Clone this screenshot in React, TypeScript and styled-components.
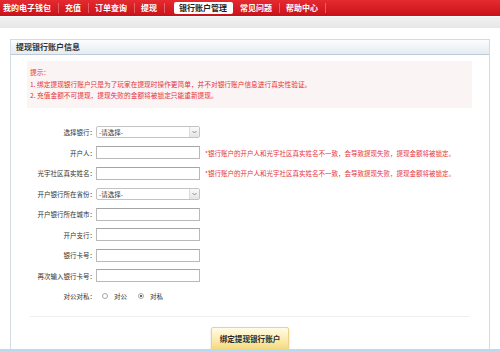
import styled, { createGlobalStyle } from "styled-components";

const GlobalStyle = createGlobalStyle`
  html, body {
    margin: 0;
    padding: 0;
    background: #ffffff;
  }
  body {
    font-family: "Noto Sans CJK SC", "Noto Sans", sans-serif;
    color: #333333;
    overflow: hidden;
  }
`;

const Page = styled.div`
  width: 500px;
  height: 351px;
  position: relative;
  overflow: hidden;
`;

const NavBar = styled.ul`
  display: flex;
  align-items: center;
  margin: 0;
  padding: 0;
  height: 16px;
  list-style: none;
  background: linear-gradient(#e52a30, #c8121a);
`;

const NavItem = styled.li<{ $active?: boolean; $first?: boolean }>`
  font-size: 8px;
  font-weight: bold;
  white-space: nowrap;
  line-height: ${({ $active }) => ($active ? "12px" : "10px")};
  color: ${({ $active }) => ($active ? "#222222" : "#ffffff")};
  background: ${({ $active }) => ($active ? "#ffffff" : "transparent")};
  border-radius: ${({ $active }) => ($active ? "2px" : "0")};
  margin: ${({ $active }) => ($active ? "0 1px 0 9px" : "0")};
  padding: ${({ $active, $first }) =>
    $active ? "0 5.5px" : $first ? "0 6.5px 0 3px" : "0 6.5px"};
  border-right: ${({ $active }) =>
    $active ? "none" : "1px solid rgba(255, 170, 170, 0.45)"};
`;

const GrayBand = styled.div`
  height: 11px;
  margin-top: 1px;
  background: linear-gradient(#f1f1f1, #e6e6e6);
`;

const Panel = styled.div`
  margin: 11px 10px 0 10px;
  border: 1px solid #d3dbe3;
  border-bottom: none;
  height: 320px;
`;

const PanelHeader = styled.div`
  height: 14px;
  line-height: 14px;
  padding-left: 5px;
  font-size: 8px;
  font-weight: bold;
  color: #333333;
  background: linear-gradient(#fbfcfd, #e6ecf2);
  border-bottom: 1px solid #bdcbd8;
`;

const TipBox = styled.div`
  margin: 6px 17px 0 16px;
  padding: 6px 3px;
  background: #fbf4f4;
  color: #e2333a;
  font-size: 6.7px;
  line-height: 11.5px;
`;

const Form = styled.div`
  display: flex;
  flex-direction: column;
  gap: 7.5px;
  margin-top: 18px;
`;

const Row = styled.div`
  display: flex;
  align-items: center;
  height: 13px;
`;

const Label = styled.span`
  width: 85px;
  text-align: right;
  font-size: 6.5px;
  color: #333333;
  white-space: nowrap;
`;

const TextInput = styled.input`
  box-sizing: border-box;
  width: 104px;
  height: 13px;
  margin: 0;
  padding: 0 2px;
  border: 1px solid #b9b9b9;
  border-top-color: #a4a4a4;
  background: #ffffff;
  font-size: 6.5px;
`;

const Select = styled.div`
  box-sizing: border-box;
  display: flex;
  align-items: center;
  justify-content: space-between;
  width: 104px;
  height: 12px;
  border: 1px solid #c3c3c3;
  border-radius: 2px;
  background: #ffffff;
  font-size: 6.5px;
  color: #333333;
  padding-left: 2px;
`;

const SelectArrow = styled.span`
  display: flex;
  align-items: center;
  justify-content: center;
  width: 9px;
  height: 10px;
  border-left: 1px solid #dcdcdc;
  background: linear-gradient(#fafafa, #e4e4e4);
`;

const Hint = styled.span`
  margin-left: 5px;
  font-size: 6.5px;
  color: #e4353c;
  white-space: nowrap;
`;

const RadioGroup = styled.div`
  display: flex;
  align-items: center;
  margin-left: 6px;
  font-size: 6.5px;
  color: #333333;
`;

const Radio = styled.span<{ $checked?: boolean }>`
  box-sizing: border-box;
  display: inline-flex;
  align-items: center;
  justify-content: center;
  width: 6px;
  height: 6px;
  margin-right: 6px;
  border: 1px solid #a8a8a8;
  border-radius: 50%;
  background: #ffffff;

  &::after {
    content: "";
    width: 2px;
    height: 2px;
    border-radius: 50%;
    background: ${({ $checked }) => ($checked ? "#333333" : "transparent")};
  }
`;

const RadioText = styled.span`
  margin-right: 11px;
`;

const Divider = styled.div`
  margin: 13px 19px 0 19px;
  border-top: 1px solid #f0f0f0;
`;

const ButtonWrap = styled.div`
  display: flex;
  justify-content: center;
  margin-top: 10px;
`;

const SubmitButton = styled.button`
  box-sizing: border-box;
  width: 78px;
  height: 24px;
  padding: 0;
  border: 1px solid #ecd38a;
  border-radius: 2px;
  background: linear-gradient(#fffbe6, #fbe9a8 60%, #f4d676);
  box-shadow: 0 1px 2px rgba(0, 0, 0, 0.18);
  font-family: inherit;
  font-size: 7.6px;
  font-weight: bold;
  color: #2a2a2a;
`;

const FooterLine = styled.div`
  position: absolute;
  left: 0;
  right: 0;
  bottom: 0;
  height: 2px;
  background: #b5dcef;
`;

const Arrow = () => (
  <svg width="5" height="4" viewBox="0 0 5 4">
    <path d="M0.5 1 L2.5 3 L4.5 1" fill="none" stroke="#777" strokeWidth="0.8" />
  </svg>
);

const navItems = ["我的电子钱包", "充值", "订单查询", "提现", "银行账户管理", "常见问题", "帮助中心"];

const nameHint = "*银行账户的开户人和光宇社区真实姓名不一致，会导致提现失败，提现金额将被锁定。";

const App = () => {
  return (
    <Page>
      <GlobalStyle />
      <NavBar>
        {navItems.map((item, i) => (
          <NavItem key={item} $first={i === 0} $active={item === "银行账户管理"}>
            {item}
          </NavItem>
        ))}
      </NavBar>
      <GrayBand />
      <Panel>
        <PanelHeader>提现银行账户信息</PanelHeader>
        <TipBox>
          <div>提示：</div>
          <div>1. 绑定提现银行账户只是为了玩家在提现时操作更简单，并不对银行账户信息进行真实性验证。</div>
          <div>2. 充值金额不可提现，提现失败的金额将被锁定只能重新提现。</div>
        </TipBox>
        <Form>
          <Row>
            <Label>选择银行：</Label>
            <Select>
              -请选择-
              <SelectArrow>
                <Arrow />
              </SelectArrow>
            </Select>
          </Row>
          <Row>
            <Label>开户人：</Label>
            <TextInput />
            <Hint>{nameHint}</Hint>
          </Row>
          <Row>
            <Label>光宇社区真实姓名：</Label>
            <TextInput />
            <Hint>{nameHint}</Hint>
          </Row>
          <Row>
            <Label>开户银行所在省份：</Label>
            <Select>
              -请选择-
              <SelectArrow>
                <Arrow />
              </SelectArrow>
            </Select>
          </Row>
          <Row>
            <Label>开户银行所在城市：</Label>
            <TextInput />
          </Row>
          <Row>
            <Label>开户支行：</Label>
            <TextInput />
          </Row>
          <Row>
            <Label>银行卡号：</Label>
            <TextInput />
          </Row>
          <Row>
            <Label>再次输入银行卡号：</Label>
            <TextInput />
          </Row>
          <Row>
            <Label>对公对私：</Label>
            <RadioGroup>
              <Radio />
              <RadioText>对公</RadioText>
              <Radio $checked />
              <RadioText>对私</RadioText>
            </RadioGroup>
          </Row>
        </Form>
        <Divider />
        <ButtonWrap>
          <SubmitButton>绑定提现银行账户</SubmitButton>
        </ButtonWrap>
      </Panel>
      <FooterLine />
    </Page>
  );
};

export default App;
